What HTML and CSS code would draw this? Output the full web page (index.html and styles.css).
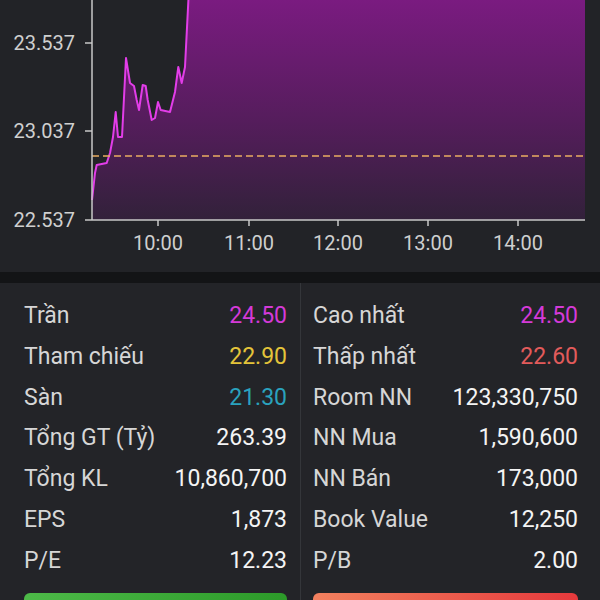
FILE: index.html
```html
<!DOCTYPE html>
<html lang="vi">
<head>
  <meta charset="UTF-8">
  <meta name="viewport" content="width=device-width, initial-scale=1.0">
  <title>Biểu đồ giá</title>
  <link rel="stylesheet" href="styles.css">
</head>
<body>
  <!-- Biểu đồ trong ngày -->
  <div class="chart">
    <svg width="600" height="272" viewBox="0 0 600 272">
      <defs>
        <linearGradient id="areaFill" x1="0" y1="0" x2="0" y2="220" gradientUnits="userSpaceOnUse">
          <stop offset="0" stop-color="#7a1b80"/>
          <stop offset="0.55" stop-color="#551d5c"/>
          <stop offset="1" stop-color="#32213a"/>
        </linearGradient>
      </defs>
      <polygon fill="url(#areaFill)" points="92,220 92,200 95,173 96.7,165 106.7,163 110,153 113,137 115.7,112 118,137 122,137 126,58 130,83 134,86 136.7,100 139,110 142.7,85 145.7,86 147.7,100 151.7,120 155,118 158,102 160.7,110 170,112 175,92 178.3,67 181.7,83 185,67 188,0 585,0 585,220"/>
      <polyline fill="none" stroke="#e23de8" stroke-width="2" stroke-linejoin="round" points="92,200 95,173 96.7,165 106.7,163 110,153 113,137 115.7,112 118,137 122,137 126,58 130,83 134,86 136.7,100 139,110 142.7,85 145.7,86 147.7,100 151.7,120 155,118 158,102 160.7,110 170,112 175,92 178.3,67 181.7,83 185,67 188.5,-2"/>
      <line class="ref-line" x1="92" y1="156" x2="585" y2="156"/>

      <g class="axis">
        <line x1="92" y1="0" x2="92" y2="220"/>
        <line x1="85" y1="220" x2="585" y2="220"/>
        <line x1="85" y1="43" x2="92" y2="43"/>
        <line x1="85" y1="131" x2="92" y2="131"/>
        <line x1="158" y1="220" x2="158" y2="226"/>
        <line x1="249" y1="220" x2="249" y2="226"/>
        <line x1="338" y1="220" x2="338" y2="226"/>
        <line x1="428" y1="220" x2="428" y2="226"/>
        <line x1="518" y1="220" x2="518" y2="226"/>
      </g>

      <g class="y-labels">
        <text x="75" y="50">23.537</text>
        <text x="75" y="138">23.037</text>
        <text x="75" y="227">22.537</text>
      </g>
      <g class="x-labels">
        <text x="158" y="250">10:00</text>
        <text x="249" y="250">11:00</text>
        <text x="338" y="250">12:00</text>
        <text x="428" y="250">13:00</text>
        <text x="518" y="250">14:00</text>
      </g>
    </svg>
  </div>

  <div class="band"></div>

  <!-- Thông tin giao dịch -->
  <div class="stats">
    <div class="col col-left">
      <div class="row"><span class="label">Trần</span><span class="value ceil">24.50</span></div>
      <div class="row"><span class="label">Tham chiếu</span><span class="value ref">22.90</span></div>
      <div class="row"><span class="label">Sàn</span><span class="value floor">21.30</span></div>
      <div class="row"><span class="label">Tổng GT (Tỷ)</span><span class="value">263.39</span></div>
      <div class="row"><span class="label">Tổng KL</span><span class="value">10,860,700</span></div>
      <div class="row"><span class="label">EPS</span><span class="value">1,873</span></div>
      <div class="row"><span class="label">P/E</span><span class="value">12.23</span></div>
      <button class="btn btn-buy" aria-label="Mua"></button>
    </div>
    <div class="col col-right">
      <div class="row"><span class="label">Cao nhất</span><span class="value ceil">24.50</span></div>
      <div class="row"><span class="label">Thấp nhất</span><span class="value down">22.60</span></div>
      <div class="row"><span class="label">Room NN</span><span class="value">123,330,750</span></div>
      <div class="row"><span class="label">NN Mua</span><span class="value">1,590,600</span></div>
      <div class="row"><span class="label">NN Bán</span><span class="value">173,000</span></div>
      <div class="row"><span class="label">Book Value</span><span class="value">12,250</span></div>
      <div class="row"><span class="label">P/B</span><span class="value">2.00</span></div>
      <button class="btn btn-sell" aria-label="Bán"></button>
    </div>
  </div>
</body>
</html>
```

FILE: styles.css
```css
* {
  box-sizing: border-box;
}
html, body {
  height: 100%;
}
body {
  margin: 0;
  background: #232428;
  color: #f2f2f2;
  font-family: Roboto, "Noto Sans", sans-serif;
  overflow: hidden;
}
.chart {
  height: 272px;
  background: #222327;
}
.chart svg {
  display: block;
}
.axis line {
  stroke: #c9c9c9;
  stroke-width: 1.5;
}
.ref-line {
  stroke: #e9ad62;
  stroke-width: 1.5;
  stroke-dasharray: 7 4;
}
.y-labels text,
.x-labels text {
  fill: #cfcfcf;
  font-family: Roboto, sans-serif;
  font-size: 20px;
}
.y-labels text {
  text-anchor: end;
}
.x-labels text {
  text-anchor: middle;
}
.band {
  height: 11px;
  background: #131416;
}
.stats {
  display: flex;
}
.col {
  width: 300px;
  padding-top: 13px;
  display: flex;
  flex-direction: column;
}
.col-left {
  padding-left: 24px;
  padding-right: 13px;
}
.col-right {
  border-left: 1px solid #34363a;
  padding-left: 12px;
  padding-right: 22px;
}
.row {
  display: flex;
  justify-content: space-between;
  font-size: 23px;
  line-height: 40.8px;
  height: 40.8px;
}
.row .value:last-child {
  margin-right: 0;
}
.col-right .value {
  margin-right: 2px;
}
.label {
  color: #d6d6d6;
}
.value {
  color: #f4f4f4;
}
.value.ceil {
  color: #d43ad8;
}
.value.ref {
  color: #e4c43a;
}
.value.floor {
  color: #2aa2be;
}
.value.down {
  color: #e25b5b;
}
.btn {
  margin-top: 11px;
  height: 44px;
  border: none;
  border-radius: 6px;
  cursor: pointer;
}
.btn-buy {
  background: linear-gradient(to right, #4dba48, #2c9a29);
}
.btn-sell {
  background: linear-gradient(to right, #f2815f, #e6393c);
}
```
